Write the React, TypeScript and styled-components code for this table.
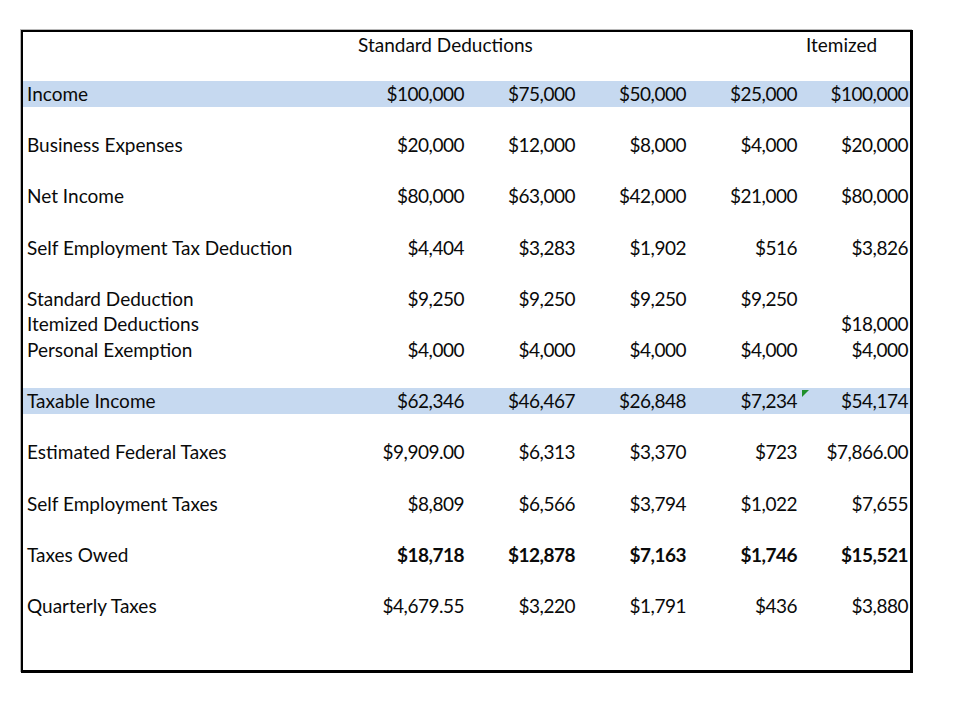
import React from "react";
import styled, { createGlobalStyle } from "styled-components";

const Global = createGlobalStyle`
  html, body { margin: 0; padding: 0; background: #ffffff; }
  body { font-family: Lato, "Open Sans", "Liberation Sans", sans-serif; color: #0a0a0a; }
`;

const COLS = "334px repeat(4, 111px) 1fr";

const Sheet = styled.div`
  box-sizing: border-box;
  margin: 30px 0 0 21px;
  width: 892px;
  border-top: 2px solid #000;
  border-left: 2px solid #000;
  border-right: 3px solid #000;
  border-bottom: 3px solid #000;
  box-shadow: -1px -1px 0 #b8b8b8;
  display: flex;
  flex-direction: column;
`;

const Row = styled.div<{ $band?: boolean; $h: number }>`
  display: grid;
  grid-template-columns: ${COLS};
  height: ${(p) => p.$h}px;
  background: ${(p) => (p.$band ? "#c6d9f0" : "transparent")};
`;

const Cell = styled.div<{ $num?: boolean; $bold?: boolean; $pl?: number; $pr?: number; $h: number }>`
  position: relative;
  font-size: 19px;
  line-height: ${(p) => p.$h + 1}px;
  white-space: nowrap;
  text-align: ${(p) => (p.$num ? "right" : "left")};
  letter-spacing: ${(p) => (p.$num ? "-0.5px" : "0")};
  font-weight: ${(p) => (p.$bold ? 700 : 400)};
  padding-left: ${(p) => p.$pl ?? 0}px;
  padding-right: ${(p) => p.$pr ?? 0}px;
`;

const Marker = styled.svg`
  position: absolute;
  left: 1px;
  top: 2px;
  width: 7px;
  height: 7px;
`;

type DataRow = {
  label: string;
  values: string[];
  band?: boolean;
  bold?: boolean;
  marker?: boolean;
} | null;

const rows: DataRow[] = [
  { label: "Income", values: ["$100,000", "$75,000", "$50,000", "$25,000", "$100,000"], band: true },
  null,
  { label: "Business Expenses", values: ["$20,000", "$12,000", "$8,000", "$4,000", "$20,000"] },
  null,
  { label: "Net Income", values: ["$80,000", "$63,000", "$42,000", "$21,000", "$80,000"] },
  null,
  { label: "Self Employment Tax Deduction", values: ["$4,404", "$3,283", "$1,902", "$516", "$3,826"] },
  null,
  { label: "Standard Deduction", values: ["$9,250", "$9,250", "$9,250", "$9,250", ""] },
  { label: "Itemized Deductions", values: ["", "", "", "", "$18,000"] },
  { label: "Personal Exemption", values: ["$4,000", "$4,000", "$4,000", "$4,000", "$4,000"] },
  null,
  { label: "Taxable Income", values: ["$62,346", "$46,467", "$26,848", "$7,234", "$54,174"], band: true, marker: true },
  null,
  { label: "Estimated Federal Taxes", values: ["$9,909.00", "$6,313", "$3,370", "$723", "$7,866.00"] },
  null,
  { label: "Self Employment Taxes", values: ["$8,809", "$6,566", "$3,794", "$1,022", "$7,655"] },
  null,
  { label: "Taxes Owed", values: ["$18,718", "$12,878", "$7,163", "$1,746", "$15,521"], bold: true },
  null,
  { label: "Quarterly Taxes", values: ["$4,679.55", "$3,220", "$1,791", "$436", "$3,880"] },
  null,
  null,
];

const RH = 25.6;
const HH = 24.5;

export default function App() {
  return (
    <>
      <Global />
      <Sheet>
        <Row $h={HH}>
          <Cell $h={HH} />
          <Cell $h={HH} $pl={1}>Standard Deductions</Cell>
          <Cell $h={HH} />
          <Cell $h={HH} />
          <Cell $h={HH} />
          <Cell $h={HH} $pl={5}>Itemized</Cell>
        </Row>
        <Row $h={HH} />
        {rows.map((r, i) =>
          r ? (
            <Row key={i} $h={RH} $band={r.band}>
              <Cell $h={RH} $pl={4}>{r.label}</Cell>
              {r.values.map((v, j) => (
                <Cell key={j} $h={RH} $num $bold={r.bold} $pr={j === 4 ? 2 : 4}>
                  {r.marker && j === 4 && (
                    <Marker viewBox="0 0 7 7">
                      <polygon points="0,0 7,0 0,7" fill="#1f8f2a" />
                    </Marker>
                  )}
                  {v}
                </Cell>
              ))}
            </Row>
          ) : (
            <Row key={i} $h={RH} />
          )
        )}
      </Sheet>
    </>
  );
}
